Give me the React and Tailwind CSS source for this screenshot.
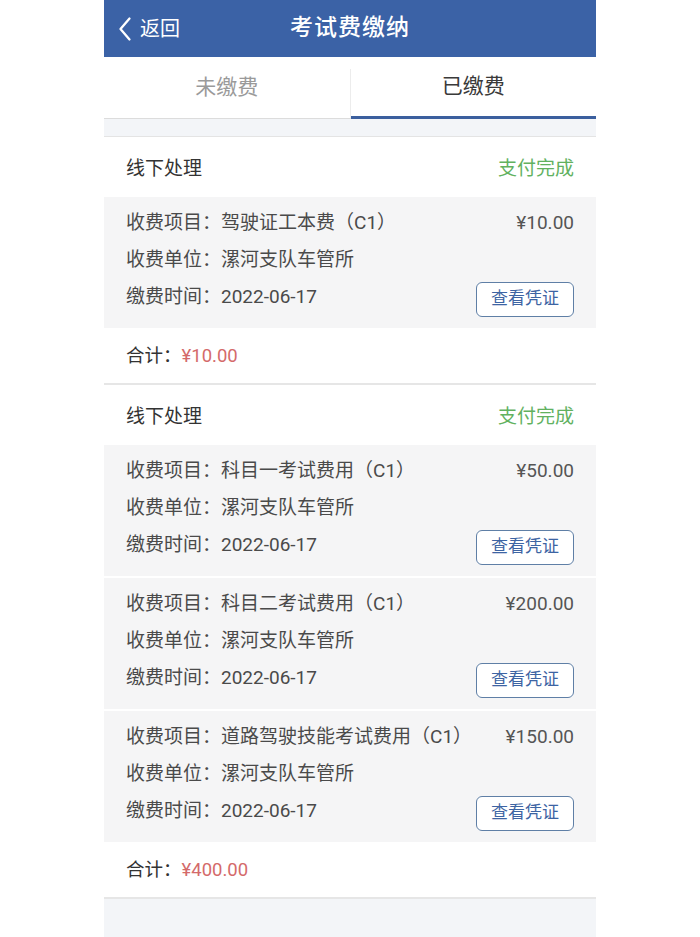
import React from "react";

const font = { fontFamily: 'Roboto, "Noto Sans CJK SC", "Noto Sans", sans-serif' };

function Item({ name, price }) {
  return (
    <div className="bg-[#f5f5f6] pl-[22px] pr-[22px] pt-[8px] pb-[12px] text-[19px] text-[#4a4a4a]">
      <div className="flex h-[37px] items-center justify-between">
        <span>收费项目：{name}</span>
        <span className="text-[#555]">{price}</span>
      </div>
      <div className="flex h-[37px] items-center">
        <span>收费单位：漯河支队车管所</span>
      </div>
      <div className="flex h-[37px] items-center justify-between">
        <span>缴费时间：2022-06-17</span>
        <span className="mt-[3px] flex h-[35px] w-[98px] items-center justify-center rounded-[6px] border border-[#5f7fa6] bg-white text-[17px] text-[#3d64a3]">
          查看凭证
        </span>
      </div>
    </div>
  );
}

function Card({ items, total }) {
  return (
    <div className="bg-white">
      <div className="flex h-[60px] items-center justify-between px-[22px] pt-[5px] text-[19px]">
        <span className="text-[#333]">线下处理</span>
        <span className="text-[#62b15f]">支付完成</span>
      </div>
      <div className="flex flex-col gap-[2px] bg-white">
        {items.map((it, i) => (
          <Item key={i} {...it} />
        ))}
      </div>
      <div className="flex h-[57px] items-center border-b-2 border-[#e6e6e6] px-[22px] pt-[2px] text-[18.5px]">
        <span className="text-[#333]">合计：</span>
        <span className="text-[#d46a6a]">{total}</span>
      </div>
    </div>
  );
}

export default function App() {
  return (
    <div className="flex min-h-[937px] w-full justify-center bg-white" style={font}>
      <div className="flex w-[492px] flex-col bg-[#f3f5f8]">
        <div className="relative flex h-[57px] items-center justify-center bg-[#3b62a6] text-white">
          <div className="absolute left-[14px] top-0 flex h-full items-center gap-[8px]">
            <svg width="14" height="26" viewBox="0 0 14 26" fill="none">
              <path d="M11.5 2.5 L2.5 13 L11.5 23.5" stroke="white" strokeWidth="2.3" strokeLinecap="round" strokeLinejoin="round" />
            </svg>
            <span className="text-[20px]">返回</span>
          </div>
          <span className="text-[23px] font-medium tracking-[1px]">考试费缴纳</span>
        </div>
        <div className="flex h-[62px] bg-white text-[21px]">
          <div className="flex flex-1 items-center justify-center border-b border-[#dcdcdc] text-[#9a9a9a]">
            未缴费
          </div>
          <div className="mt-[12px] w-px border-b border-[#dcdcdc] bg-[#ececec]" />
          <div className="flex flex-1 items-center justify-center border-b-[3px] border-[#3b5f9e] text-[#3a3a3a]">
            已缴费
          </div>
        </div>
        <div className="h-[18px] border-b border-[#e4e4e4] bg-[#f3f5f8]" />
        <Card
          items={[{ name: "驾驶证工本费（C1）", price: "¥10.00" }]}
          total="¥10.00"
        />
        <Card
          items={[
            { name: "科目一考试费用（C1）", price: "¥50.00" },
            { name: "科目二考试费用（C1）", price: "¥200.00" },
            { name: "道路驾驶技能考试费用（C1）", price: "¥150.00" },
          ]}
          total="¥400.00"
        />
        <div className="flex-1 bg-[#f3f5f8]" />
      </div>
    </div>
  );
}
